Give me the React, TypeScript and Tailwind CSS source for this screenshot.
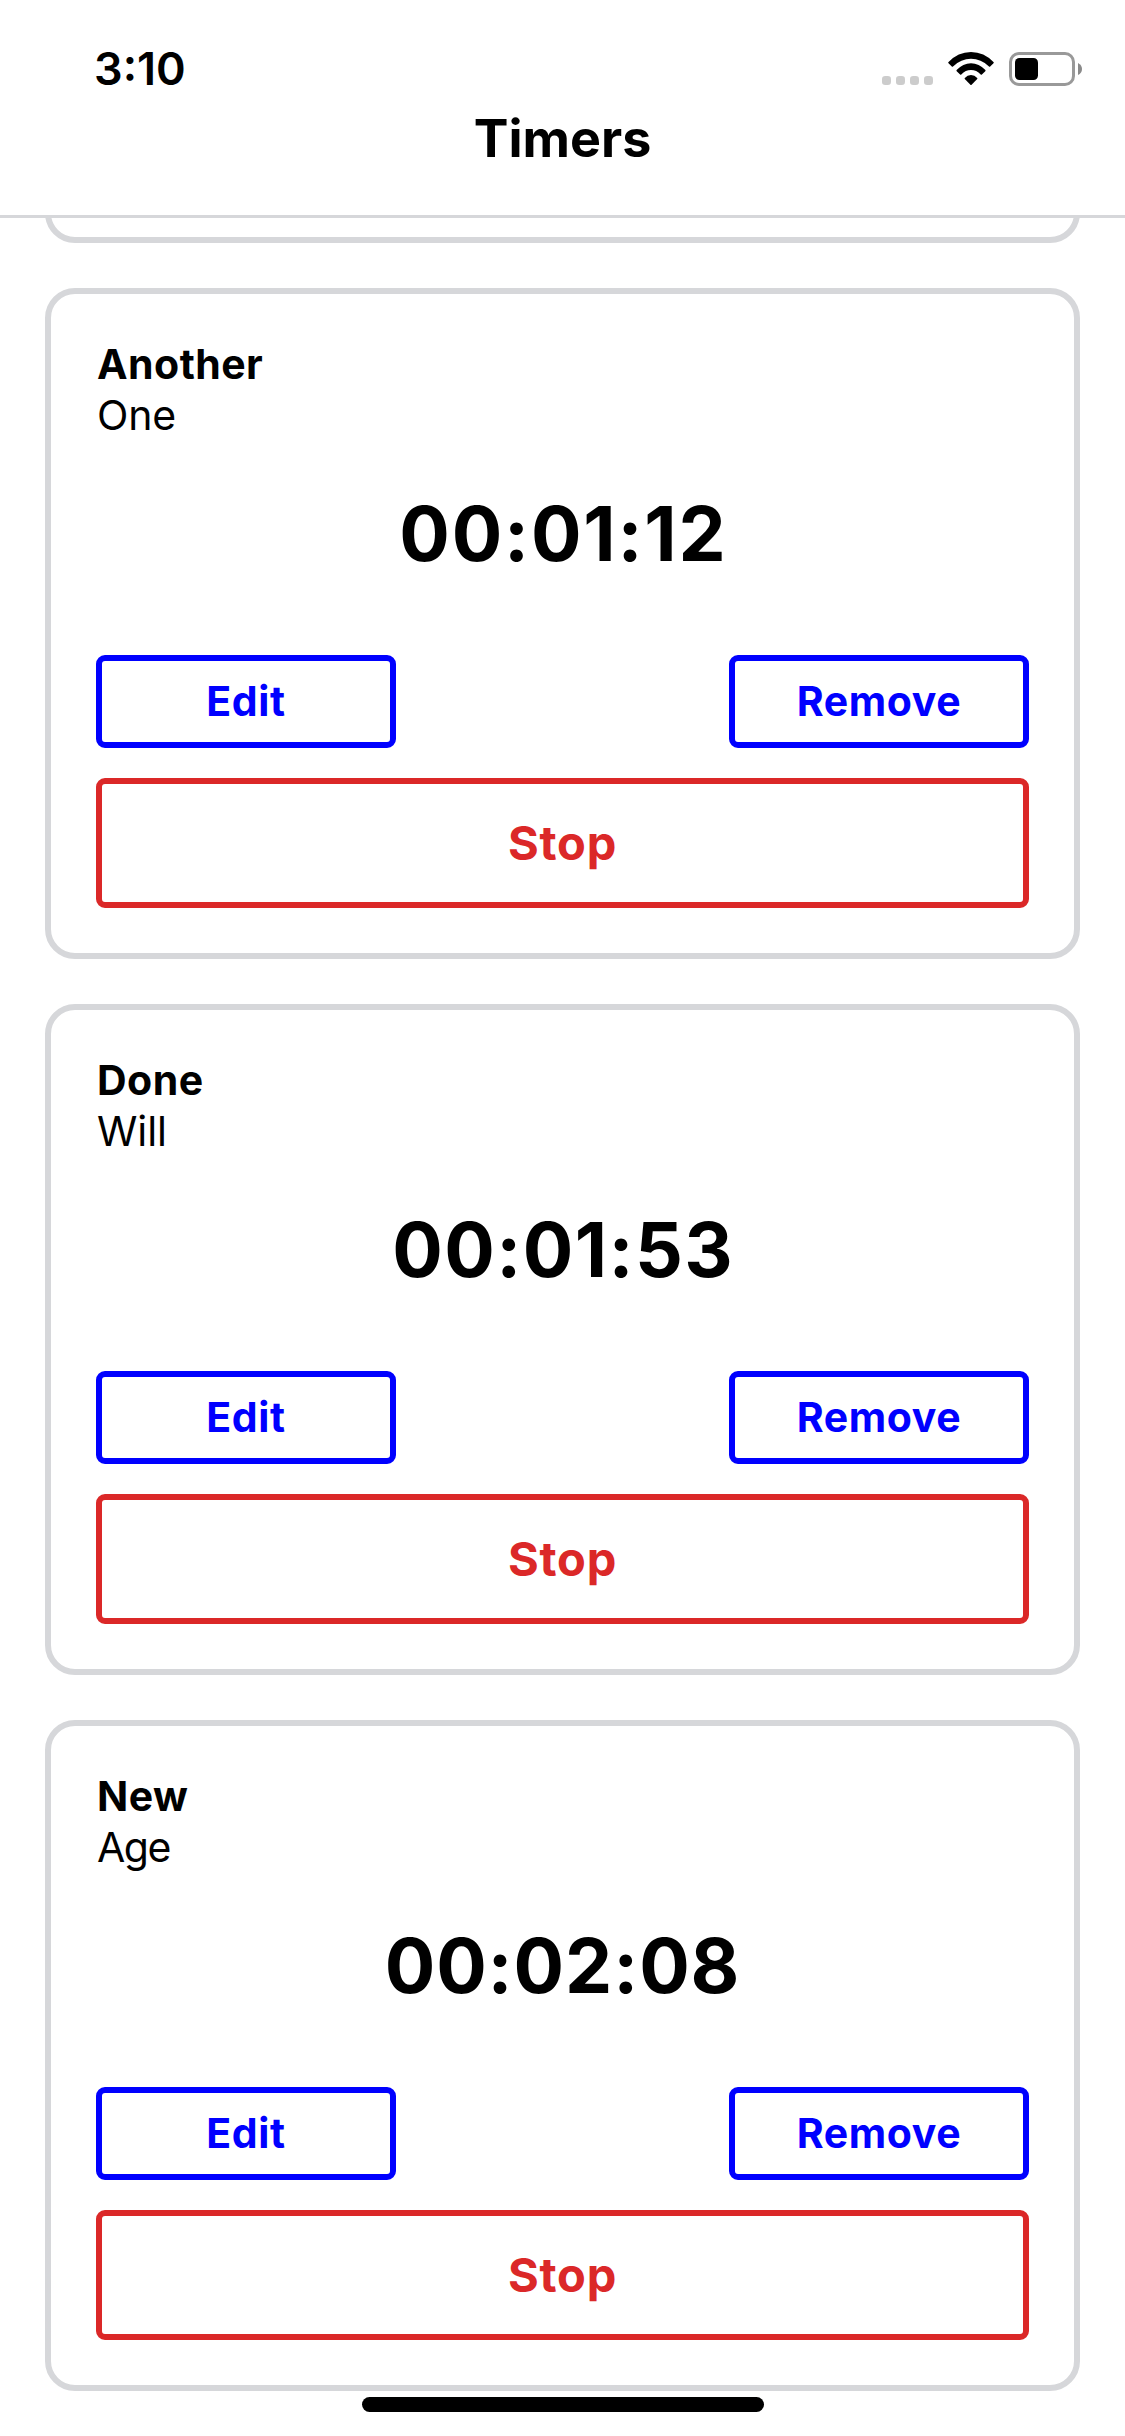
const timers = [
  { title: "Another", project: "One", elapsed: "00:01:12", spacing: "tracking-[1.8px] pl-[1.8px]", projectSpacing: "tracking-[-0.1px]" },
  { title: "Done", project: "Will", elapsed: "00:01:53", spacing: "tracking-[1.4px] pl-[1.4px]", projectSpacing: "tracking-[-0.1px]" },
  { title: "New", project: "Age", elapsed: "00:02:08", spacing: "tracking-[0.9px]", projectSpacing: "tracking-[-1.5px]" },
];

function StatusIcons() {
  return (
    <svg width="202" height="36" viewBox="880 50 202 36" className="block">
      <g fill="#cccccc">
        <rect x="882" y="76" width="9" height="9" rx="3.2" />
        <rect x="896" y="76" width="9" height="9" rx="3.2" />
        <rect x="910" y="76" width="9" height="9" rx="3.2" />
        <rect x="924" y="76" width="9" height="9" rx="3.2" />
      </g>
      <path d="M948.3 62.2Q958 52 971 52T993.7 62.2Q994 62.8 993.5 63.3L990.2 66.4Q989.6 67 989 66.4Q981 58.7 971 58.7T953 66.4Q952.4 67 951.8 66.4L948.5 63.3Q948 62.8 948.3 62.2Z" />
      <path d="M956.6 70.1Q963 63.2 971 63.2T985.4 70.1Q985.8 70.7 985.3 71.2L981.9 74.4Q981.3 74.9 980.7 74.4Q976.5 70 971 70T961.3 74.4Q960.7 74.9 960.1 74.4L956.7 71.2Q956.2 70.7 956.6 70.1Z" />
      <path d="M964.8 78Q967.3 75.1 971 75.1T977.2 78Q977.7 78.6 977.2 79.1L971.6 84.7Q971 85.2 970.4 84.7L964.8 79.1Q964.3 78.6 964.8 78Z" />
      <rect x="1010.5" y="53.5" width="63" height="31" rx="8.5" fill="none" stroke="#999999" strokeWidth="3" />
      <rect x="1015" y="58" width="23" height="22" rx="4.5" />
      <path d="M1078 63Q1082 65 1082 69T1078 75Z" fill="#8a8a8a" />
    </svg>
  );
}

function SmallButton({ label }: { label: string }) {
  return (
    <button className="flex h-[93px] w-[300px] items-center justify-center rounded-[9px] border-[6px] border-[#0000ff] text-[41px] font-bold leading-none tracking-[0.6px] text-[#0000ff]">
      {label}
    </button>
  );
}

function TimerCard({ title, project, elapsed, spacing, projectSpacing }: (typeof timers)[number]) {
  return (
    <section className="h-[671px] shrink-0 rounded-[30px] border-[6px] border-[#d6d7da] p-[45px]">
      <h2 className="pl-px text-[41px] font-bold leading-[51px] tracking-[0.45px]">{title}</h2>
      <p className={`pl-px text-[41px] leading-[51px] ${projectSpacing}`}>{project}</p>
      <div className={`mt-[48px] mb-[76px] text-center text-[75px] font-bold leading-[90px] ${spacing}`}>{elapsed}</div>
      <div className="flex justify-between">
        <SmallButton label="Edit" />
        <SmallButton label="Remove" />
      </div>
      <button className="mt-[30px] flex h-[130px] w-full items-center justify-center rounded-[9px] border-[6px] border-[#db2828] pb-[2px] text-[47px] font-bold leading-none tracking-[0.8px] text-[#db2828]">
        Stop
      </button>
    </section>
  );
}

export default function App() {
  return (
    <div className="relative flex h-[2436px] w-[1125px] flex-col overflow-hidden bg-white font-['Inter',sans-serif] text-black">
      <header className="h-[218px] shrink-0 border-b-[3px] border-[#d6d7da]">
        <div className="flex h-[100px] items-start justify-between pr-[43px] pl-[94px]">
          <span className="pt-[42px] text-[45px] font-semibold leading-[54px]">3:10</span>
          <div className="pt-[50px]">
            <StatusIcons />
          </div>
        </div>
        <h1 className="mt-[9px] text-center text-[52px] font-bold leading-[60px]">Timers</h1>
      </header>
      <main className="flex min-h-0 flex-1 flex-col gap-[45px] overflow-hidden px-[45px]">
        <div className="flex h-[25px] shrink-0 flex-col justify-end overflow-hidden">
          <div className="h-[100px] shrink-0 rounded-b-[30px] border-[6px] border-[#d6d7da]" />
        </div>
        {timers.map((timer) => (
          <TimerCard key={timer.title} {...timer} />
        ))}
      </main>
      <div className="absolute bottom-[24px] left-[362px] h-[15px] w-[402px] rounded-full bg-black" />
    </div>
  );
}
